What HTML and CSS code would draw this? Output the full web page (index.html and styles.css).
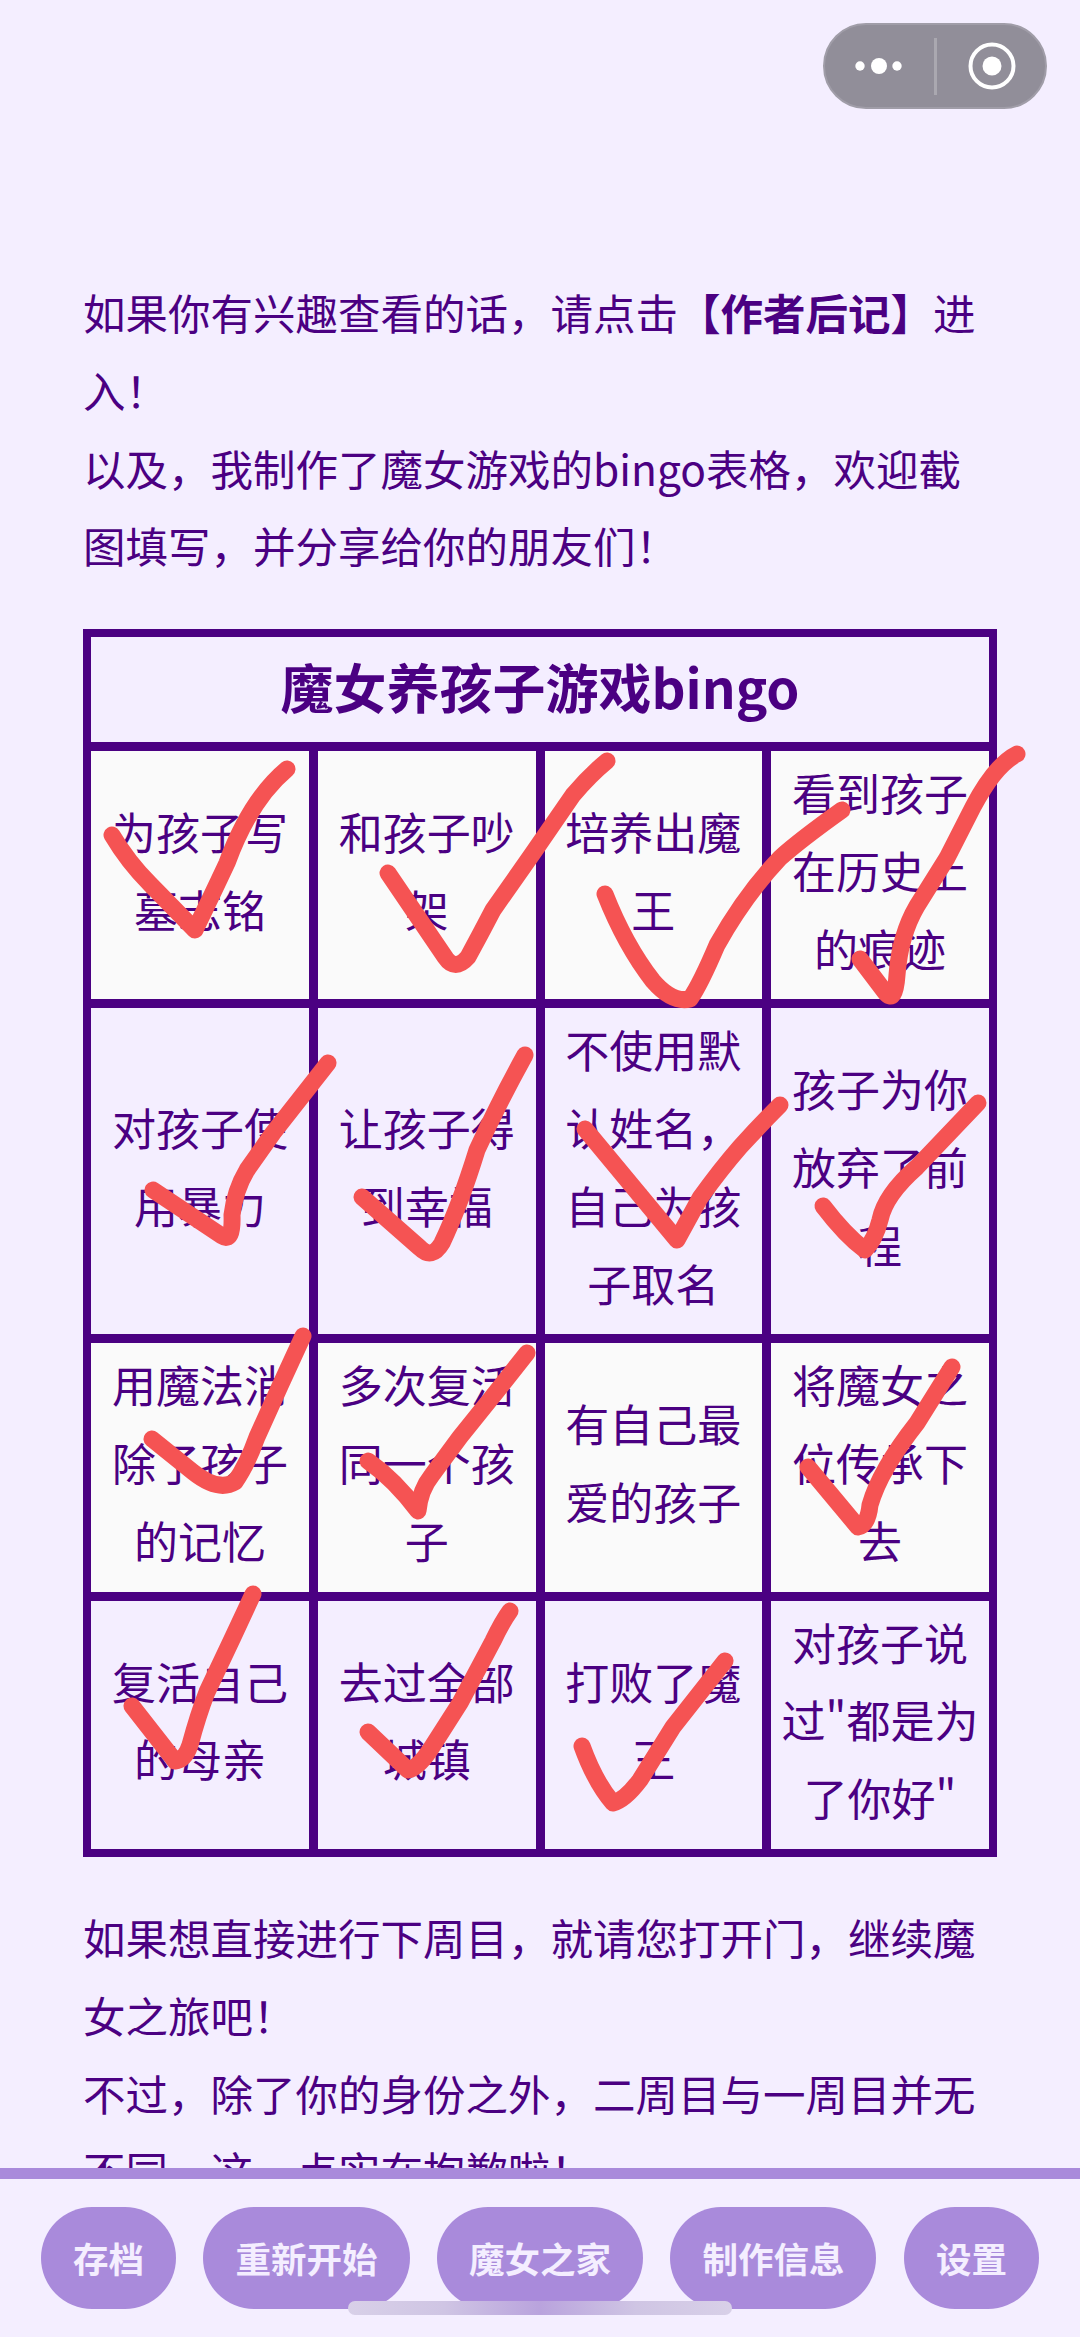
FILE: index.html
```html
<!DOCTYPE html>
<html lang="zh">
	<head>
		<meta charset="utf-8" />
		<title>魔女养孩子游戏</title>
		<link rel="stylesheet" href="styles.css">
	</head>
	<body>
		<div class="page">
			<div class="content">
				<p>如果你有兴趣查看的话，请点击<strong>【作者后记】</strong>进入！<br />以及，我制作了魔女游戏的bingo表格，欢迎截图填写，并分享给你的朋友们！</p>
				<table class="bingo">
					<tr><th colspan="4">魔女养孩子游戏bingo</th></tr>
					<tr class="light">
						<td>为孩子写墓志铭</td>
						<td>和孩子吵架</td>
						<td>培养出魔王</td>
						<td>看到孩子在历史上的痕迹</td>
					</tr>
					<tr>
						<td>对孩子使用暴力</td>
						<td>让孩子得到幸福</td>
						<td>不使用默认姓名，自己为孩子取名</td>
						<td>孩子为你放弃了前程</td>
					</tr>
					<tr class="light">
						<td>用魔法消除了孩子的记忆</td>
						<td>多次复活同一个孩子</td>
						<td>有自己最爱的孩子</td>
						<td>将魔女之位传承下去</td>
					</tr>
					<tr>
						<td>复活自己的母亲</td>
						<td>去过全部城镇</td>
						<td>打败了魔王</td>
						<td>对孩子说过"都是为了你好"</td>
					</tr>
				</table>
				<p>如果想直接进行下周目，就请您打开门，继续魔女之旅吧！<br />不过，除了你的身份之外，二周目与一周目并无不同，这一点实在抱歉啦！</p>
			</div>
			<div class="toolbar">
				<a class="tool">存档</a>
				<a class="tool">重新开始</a>
				<a class="tool">魔女之家</a>
				<a class="tool">制作信息</a>
				<a class="tool">设置</a>
			</div>
		</div>

		<!-- hand drawn ticks on top of the screenshot -->
		<svg class="ticks" width="1080" height="2337" viewBox="0 0 1080 2337">
			<path d="M112 835 Q128 862 150 884 L195 930 Q212 895 227 863 Q250 800 287 769" />
			<path d="M388 873 L445 957 Q455 972 468 957 Q480 935 493 910 L533 853 L573 795 Q590 775 607 761" />
			<path d="M605 894 Q625 945 653 981 Q672 1003 690 999 Q700 985 717 945 Q745 895 780 858 Q800 840 842 810" />
			<path d="M860 959 L885 992 Q895 1005 897 975 Q900 935 917 906 L947 858 L973 807 Q995 765 1017 754" />
			<path d="M153 1190 L222 1236 Q233 1243 232 1215 Q235 1190 247 1170 L273 1133 L328 1063" />
			<path d="M362 1197 L420 1248 Q432 1260 442 1243 Q460 1205 477 1150 Q500 1100 525 1055" />
			<path d="M585 1129 L677 1240 L700 1198 Q720 1170 740 1147 Q760 1125 780 1105" />
			<path d="M823 1206 Q845 1235 865 1250 Q875 1240 880 1220 Q885 1195 917 1167 L978 1103" />
			<path d="M152 1439 L193 1472 Q218 1492 235 1482 Q247 1465 257 1437 L280 1386 L303 1336" />
			<path d="M368 1461 Q395 1480 418 1511 Q420 1490 432 1475 L460 1437 L493 1396 L527 1353" />
			<path d="M808 1467 L858 1527 Q868 1525 870 1505 Q880 1470 917 1423 L952 1367" />
			<path d="M132 1706 L175 1761 Q185 1760 190 1745 Q198 1715 207 1692 L233 1637 L253 1594" />
			<path d="M368 1732 L408 1770 Q418 1768 430 1750 L460 1703 L493 1641 Q502 1622 510 1611" />
			<path d="M582 1746 Q595 1782 613 1803 Q625 1800 640 1780 L673 1727 L725 1661" />
		</svg>

		<div class="capsule">
			<svg class="capsule-more" width="60" height="20" viewBox="0 0 60 20">
				<circle cx="9" cy="10" r="4.7" />
				<circle cx="28" cy="10" r="8" />
				<circle cx="46" cy="10" r="4.7" />
			</svg>
			<span class="capsule-line"></span>
			<svg class="capsule-close" width="48" height="48" viewBox="0 0 48 48">
				<circle class="ring" cx="24" cy="24" r="21.5" />
				<circle cx="24" cy="24" r="9.5" />
			</svg>
		</div>
		<div class="home-bar"></div>
	</body>
</html>
```

FILE: styles.css
```css
*{
	margin: 0;
	padding: 0;
	box-sizing: border-box;
}
body{
	position: relative;
	width: 1080px;
	height: 2337px;
	overflow: hidden;
	background: #f4eeff;
	color: #4b0082;
	font-family: "Noto Sans CJK SC", "Noto Sans", sans-serif;
	font-size: 42.5px;
	line-height: 77.76px;
}
.page{
	display: flex;
	flex-direction: column;
	height: 2337px;
}
.content{
	flex: 1;
	min-height: 0;
	overflow: hidden;
	padding: 273px 83px 0;
}
.bingo{
	width: 914px;
	margin: 45px 0 41px;
	border-collapse: collapse;
	table-layout: fixed;
}
.bingo th,
.bingo td{
	border: 9px solid #4b0082;
	text-align: center;
	vertical-align: middle;
}
.bingo tr:first-child th{
	border-top-width: 8px;
}
.bingo tr:last-child td{
	border-bottom-width: 8px;
}
.bingo th,
.bingo td:first-child{
	border-left-width: 8px;
}
.bingo th,
.bingo td:last-child{
	border-right-width: 8px;
}
.bingo td{
	padding: 3px 8px 12px;
	font-size: 44px;
}
.bingo th{
	padding: 4px 8px 11px;
	font-size: 53px;
	line-height: 90px;
}
.light td{
	background: #fafafa;
}
.toolbar{
	display: flex;
	justify-content: space-between;
	align-items: flex-start;
	height: 169px;
	padding: 28px 41px 0;
	border-top: 11px solid #a98adb;
	background: #f4eeff;
}
.tool{
	height: 102px;
	padding: 0 32px;
	border-radius: 51px;
	background: #a98adb;
	color: #f4eeff;
	font-size: 35.5px;
	font-weight: bold;
	line-height: 102px;
}
.ticks{
	position: absolute;
	top: 0;
	left: 0;
}
.ticks path{
	fill: none;
	stroke: #f55353;
	stroke-width: 17;
	stroke-linecap: round;
	stroke-linejoin: round;
}
.capsule{
	position: absolute;
	top: 23px;
	left: 823px;
	display: flex;
	align-items: center;
	width: 224px;
	height: 86px;
	padding-left: 26px;
	border: 2px solid #a09da8;
	border-radius: 43px;
	background: #918e99;
}
.capsule svg{
	fill: #fff;
}
.capsule-line{
	width: 3px;
	height: 57px;
	margin: 0 31px 0 23px;
	background: #aaa8b0;
}
.capsule .ring{
	fill: none;
	stroke: #fff;
	stroke-width: 4;
}
.home-bar{
	position: absolute;
	top: 2301px;
	left: 348px;
	width: 384px;
	height: 14px;
	border-radius: 7px;
	background: linear-gradient(90deg, #d8d0e8 0%, #cfc5e4 25%, #b9a3dd 50%, #cfc5e4 75%, #d8d0e8 100%);
}
```
